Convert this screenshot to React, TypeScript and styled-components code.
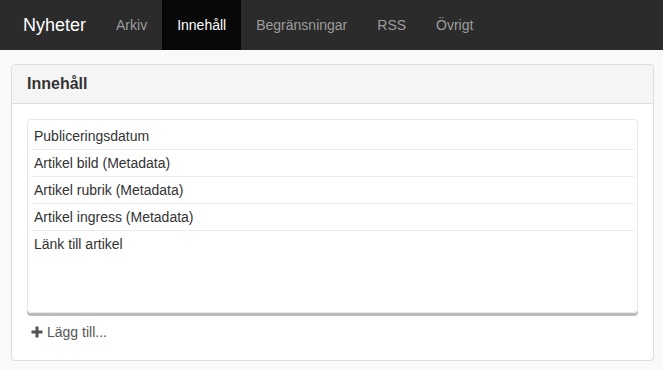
import React from 'react'
import styled, { createGlobalStyle } from 'styled-components'

const GlobalStyle = createGlobalStyle`
  html, body {
    margin: 0;
    padding: 0;
    background: #f9f9f9;
    font-family: "Liberation Sans", Arial, sans-serif;
    font-size: 14px;
    color: #333;
  }
`

const Navbar = styled.nav`
  display: flex;
  align-items: stretch;
  height: 50px;
  padding: 0 8px;
  background: #2b2b2b;
`

const Brand = styled.a`
  padding: 15px;
  font-size: 18px;
  line-height: 20px;
  color: #fff;
  text-decoration: none;
`

const NavLink = styled.a<{ $active?: boolean }>`
  padding: 15px;
  line-height: 20px;
  color: ${p => (p.$active ? '#fff' : '#9d9d9d')};
  background: ${p => (p.$active ? '#080808' : 'transparent')};
  text-decoration: none;
`

const Page = styled.main`
  padding: 14px 9px 0 11px;
`

const Panel = styled.section`
  background: #fff;
  border: 1px solid #dddddd;
  border-radius: 4px;
  box-shadow: 0 1px 1px rgba(0, 0, 0, 0.05);
`

const PanelHeading = styled.header`
  padding: 10px 15px;
  background: #f5f5f5;
  border-bottom: 1px solid #dddddd;
  border-radius: 3px 3px 0 0;
`

const PanelTitle = styled.h3`
  margin: 0;
  font-size: 16px;
  line-height: 18px;
  font-weight: bold;
  color: #333;
`

const PanelBody = styled.div`
  padding: 15px 15px 18px;
`

const FieldList = styled.ul`
  list-style: none;
  margin: 0;
  padding: 3px 3px 0;
  box-sizing: border-box;
  height: 194px;
  border: 1px solid #e8e8e8;
  border-radius: 4px;
  box-shadow: 0 3px 0 #bbbbbb;
`

const FieldItem = styled.li`
  padding: 5px 3px;
  line-height: 16px;
  border-bottom: 1px solid #eaeaea;
  color: #333;

  &:last-child {
    border-bottom: none;
  }
`

const AddLink = styled.a`
  display: flex;
  align-items: center;
  gap: 4px;
  margin: 9px 0 0 4px;
  line-height: 20px;
  color: #555;
  text-decoration: none;
`

const PlusIcon = () => (
  <svg width="12" height="12" viewBox="0 0 12 12" aria-hidden="true">
    <rect x="4.5" y="0.5" width="3" height="11" fill="#555" />
    <rect x="0.5" y="4.5" width="11" height="3" fill="#555" />
  </svg>
)

const navItems = ['Arkiv', 'Innehåll', 'Begränsningar', 'RSS', 'Övrigt']

const fields = [
  'Publiceringsdatum',
  'Artikel bild (Metadata)',
  'Artikel rubrik (Metadata)',
  'Artikel ingress (Metadata)',
  'Länk till artikel',
]

export default function App() {
  return (
    <>
      <GlobalStyle />
      <Navbar>
        <Brand href="#">Nyheter</Brand>
        {navItems.map(item => (
          <NavLink key={item} href="#" $active={item === 'Innehåll'}>
            {item}
          </NavLink>
        ))}
      </Navbar>
      <Page>
        <Panel>
          <PanelHeading>
            <PanelTitle>Innehåll</PanelTitle>
          </PanelHeading>
          <PanelBody>
            <FieldList>
              {fields.map(f => (
                <FieldItem key={f}>{f}</FieldItem>
              ))}
            </FieldList>
            <AddLink href="#">
              <PlusIcon />
              Lägg till...
            </AddLink>
          </PanelBody>
        </Panel>
      </Page>
    </>
  )
}
